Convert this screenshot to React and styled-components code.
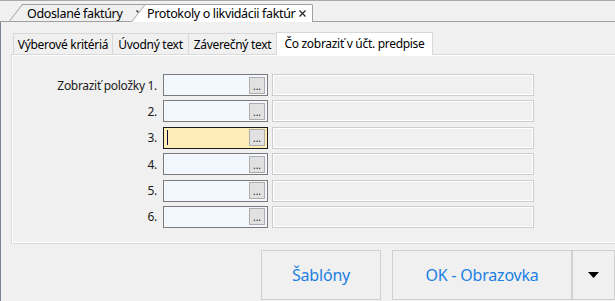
import React from 'react'
import styled, { createGlobalStyle } from 'styled-components'

const GlobalStyle = createGlobalStyle`
  html, body {
    margin: 0;
    padding: 0;
    background: #f0f0f0;
  }
  body {
    font-family: "Noto Sans", "Open Sans", sans-serif;
    color: #000;
  }
`;

const Window = styled.div`
  width: 615px;
  height: 301px;
  overflow: hidden;
  box-sizing: border-box;
  border-top: 1px solid #a9a9a9;
  display: flex;
  flex-direction: column;
  background: #f0f0f0;
`;

const DocStrip = styled.div`
  height: 21px;
  flex: none;
  box-sizing: border-box;
  border-bottom: 1px solid #a0a0a0;
  display: flex;
  align-items: flex-end;
  padding-left: 22px;
`;

const DocTab = styled.div`
  position: relative;
  isolation: isolate;
  box-sizing: border-box;
  height: ${p => (p.$active ? 18 : 17)}px;
  margin-bottom: ${p => (p.$active ? -1 : 0)}px;
  margin-left: ${p => p.$offset || 0}px;
  width: ${p => p.$width}px;
  padding: 0 6px 0 ${p => (p.$active ? 3 : 5)}px;
  display: flex;
  align-items: center;
  justify-content: space-between;
  font-size: 12.5px;
  letter-spacing: -0.35px;
  white-space: nowrap;
  background: ${p => (p.$active ? '#ffffff' : '#f0f0f0')};
  border-top: 1px solid #a0a0a0;
  border-right: 1px solid #a0a0a0;
  border-top-right-radius: 2px;

  &::before {
    content: '';
    position: absolute;
    z-index: -1;
    left: -13px;
    top: -1px;
    bottom: 0;
    width: 22px;
    background: inherit;
    border-left: 1px solid #a0a0a0;
    border-top: 1px solid #a0a0a0;
    transform-origin: bottom left;
    transform: skewX(-38deg);
  }
`;

const Close = styled.svg`
  flex: none;
  width: 7px;
  height: 7px;
`;

const Body = styled.div`
  flex: 1;
  border-left: 1px solid #7b8491;
  padding: 10px 0 0 10px;
  display: flex;
  flex-direction: column;
`;

const TabBar = styled.div`
  display: flex;
  align-items: flex-end;
  height: 22px;
  padding-left: 2px;
  position: relative;
  z-index: 1;
`;

const Tab = styled.div`
  box-sizing: border-box;
  width: ${p => p.$width}px;
  height: ${p => (p.$active ? 23 : 21)}px;
  margin-right: -1px;
  margin-bottom: ${p => (p.$active ? -1 : 0)}px;
  border: 1px solid #d9d9d9;
  border-bottom: none;
  background: ${p => (p.$active ? '#ffffff' : '#f0f0f0')};
  font-size: 12px;
  letter-spacing: -0.3px;
  display: flex;
  align-items: center;
  justify-content: center;
  padding-bottom: ${p => (p.$active ? 2 : 0)}px;
  white-space: nowrap;
`;

const Panel = styled.div`
  box-sizing: border-box;
  height: 190px;
  margin-right: -20px;
  border: 1px solid #d9d9d9;
  box-shadow: inset 1px 1px 0 #fff, inset -1px -1px 0 #fff;
  padding-top: 19px;
`;

const Rows = styled.div`
  display: flex;
  flex-direction: column;
  gap: 4.4px;
`;

const Row = styled.div`
  display: flex;
  align-items: center;
  height: 22px;
`;

const Label = styled.div`
  width: 145px;
  margin-right: 6px;
  text-align: right;
  font-size: 12px;
  letter-spacing: -0.3px;
  color: #1a1a1a;
  white-space: nowrap;
`;

const Field = styled.div`
  box-sizing: border-box;
  width: 105px;
  height: 22px;
  border: 1px solid ${p => (p.$focused ? '#1a1a1a' : '#7a7a7a')};
  background: ${p => (p.$focused ? '#ffedb8' : '#f3f8fe')};
  display: flex;
  align-items: center;
  justify-content: space-between;
  padding: 0 2px 0 3px;
`;

const Caret = styled.span`
  width: 1px;
  height: 15px;
  background: #0b0b3b;
`;

const Ellipsis = styled.div`
  box-sizing: border-box;
  width: 16px;
  height: 17px;
  margin-left: auto;
  border: 1px solid #adadad;
  background: #e1e1e1;
  font-size: 10px;
  line-height: 1;
  display: flex;
  align-items: flex-end;
  justify-content: center;
  padding-bottom: 2px;
  color: #222;
`;

const Display = styled.div`
  box-sizing: border-box;
  width: 262px;
  height: 22px;
  margin-left: 4px;
  border: 1px solid #cdcdcd;
  box-shadow: inset 0 0 0 1px #fff;
`;

const Footer = styled.div`
  display: flex;
  justify-content: flex-end;
  gap: 11px;
  padding-top: 6px;
`;

const Split = styled.div`
  display: flex;
`;

const Button = styled.div`
  box-sizing: border-box;
  width: ${p => p.$width}px;
  height: 50px;
  border: 1px solid #d0d0d0;
  background: #f0f0f0;
  color: #1b7fe3;
  font-size: 16px;
  letter-spacing: -0.2px;
  display: flex;
  align-items: center;
  justify-content: center;
`;

const Arrow = styled.svg`
  width: 11px;
  height: 6px;
`;

const CloseIcon = () => (
  <Close viewBox="0 0 7 7">
    <path d="M0.5 0.5 L6.5 6.5 M6.5 0.5 L0.5 6.5" stroke="#2b2b2b" strokeWidth="1.3" />
  </Close>
);

const rows = ['Zobraziť položky 1.', '2.', '3.', '4.', '5.', '6.'];

const App = () => {
  return (
    <Window>
      <GlobalStyle />
      <DocStrip>
        <DocTab $width={128}>
          <span>Odoslané faktúry</span>
          <CloseIcon />
        </DocTab>
        <DocTab $active $width={169} $offset={-6}>
          <span>Protokoly o likvidácii faktúr</span>
          <CloseIcon />
        </DocTab>
      </DocStrip>
      <Body>
        <TabBar>
          <Tab $width={100}>Výberové kritériá</Tab>
          <Tab $width={77}>Úvodný text</Tab>
          <Tab $width={89}>Záverečný text</Tab>
          <Tab $active $width={157}>Čo zobraziť v účt. predpise</Tab>
        </TabBar>
        <Panel>
          <Rows>
            {rows.map((label, i) => (
              <Row key={label}>
                <Label>{label}</Label>
                <Field $focused={i === 2}>
                  {i === 2 && <Caret />}
                  <Ellipsis>...</Ellipsis>
                </Field>
                <Display />
              </Row>
            ))}
          </Rows>
        </Panel>
        <Footer>
          <Button $width={120}>Šablóny</Button>
          <Split>
            <Button $width={180}>OK - Obrazovka</Button>
            <Button $width={43}>
              <Arrow viewBox="0 0 11 6">
                <polygon points="0,0 11,0 5.5,6" fill="#000" />
              </Arrow>
            </Button>
          </Split>
        </Footer>
      </Body>
    </Window>
  )
}

export default App
